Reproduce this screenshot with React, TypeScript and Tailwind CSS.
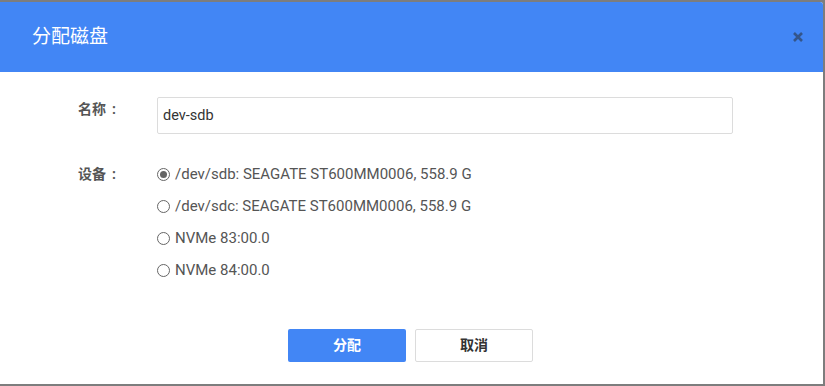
const devices = [
  "/dev/sdb: SEAGATE ST600MM0006, 558.9 G",
  "/dev/sdc: SEAGATE ST600MM0006, 558.9 G",
  "NVMe 83:00.0",
  "NVMe 84:00.0",
];

export default function App() {
  const selected = 0;
  return (
    <div className="h-[386px] w-[825px] bg-[#7d7d7d] pt-[2px] pr-[2px] pb-[2px] font-['Roboto','Noto_Sans_CJK_SC',sans-serif]">
      <div className="flex h-full flex-col overflow-hidden rounded-tr-[3px] bg-white">
        <header className="flex h-[70px] shrink-0 items-center justify-between bg-[#4286f5] pl-[32px] pr-[17px]">
          <h1 className="text-[19px] font-normal text-white">分配磁盘</h1>
          <button className="flex h-4 w-4 items-center justify-center text-[#34558a]">
            <svg width="10" height="10" viewBox="0 0 10 10">
              <path d="M1 1 L9 9 M9 1 L1 9" stroke="currentColor" strokeWidth="2.6" />
            </svg>
          </button>
        </header>

        <div className="flex flex-1 flex-col pt-[25px]">
          <div className="flex items-center">
            <label className="w-[157px] self-start pt-[2px] pl-[78px] text-[14px] font-bold text-[#555]">
              名称<span className="ml-[6px]">:</span>
            </label>
            <input
              className="h-[37px] w-[576px] rounded-[2px] border border-[#dcdcdc] px-[5px] text-[14.5px] text-[#333] outline-none"
              defaultValue="dev-sdb"
            />
          </div>

          <div className="mt-[30px] flex">
            <label className="w-[157px] pl-[78px] text-[14px] font-bold leading-[20px] text-[#555]">
              设备<span className="ml-[6px]">:</span>
            </label>
            <div className="flex flex-col gap-[12px]">
              {devices.map((d, i) => (
                <label key={d} className="flex h-[20px] items-center gap-[5px] text-[15px] text-[#555]">
                  <span className="flex h-[13px] w-[13px] items-center justify-center rounded-full border border-[#666] bg-white">
                    {i === selected && <span className="h-[7px] w-[7px] rounded-full bg-[#666]" />}
                  </span>
                  {d}
                </label>
              ))}
            </div>
          </div>

          <div className="mt-auto mb-[22px] flex justify-center gap-[9px] pr-[2px]">
            <button className="h-[33px] w-[118px] rounded-[2px] bg-[#4286f5] text-[14px] font-bold text-white">分配</button>
            <button className="h-[33px] w-[118px] rounded-[2px] border border-[#dcdcdc] bg-white text-[14px] font-bold text-[#333]">取消</button>
          </div>
        </div>
      </div>
    </div>
  );
}
